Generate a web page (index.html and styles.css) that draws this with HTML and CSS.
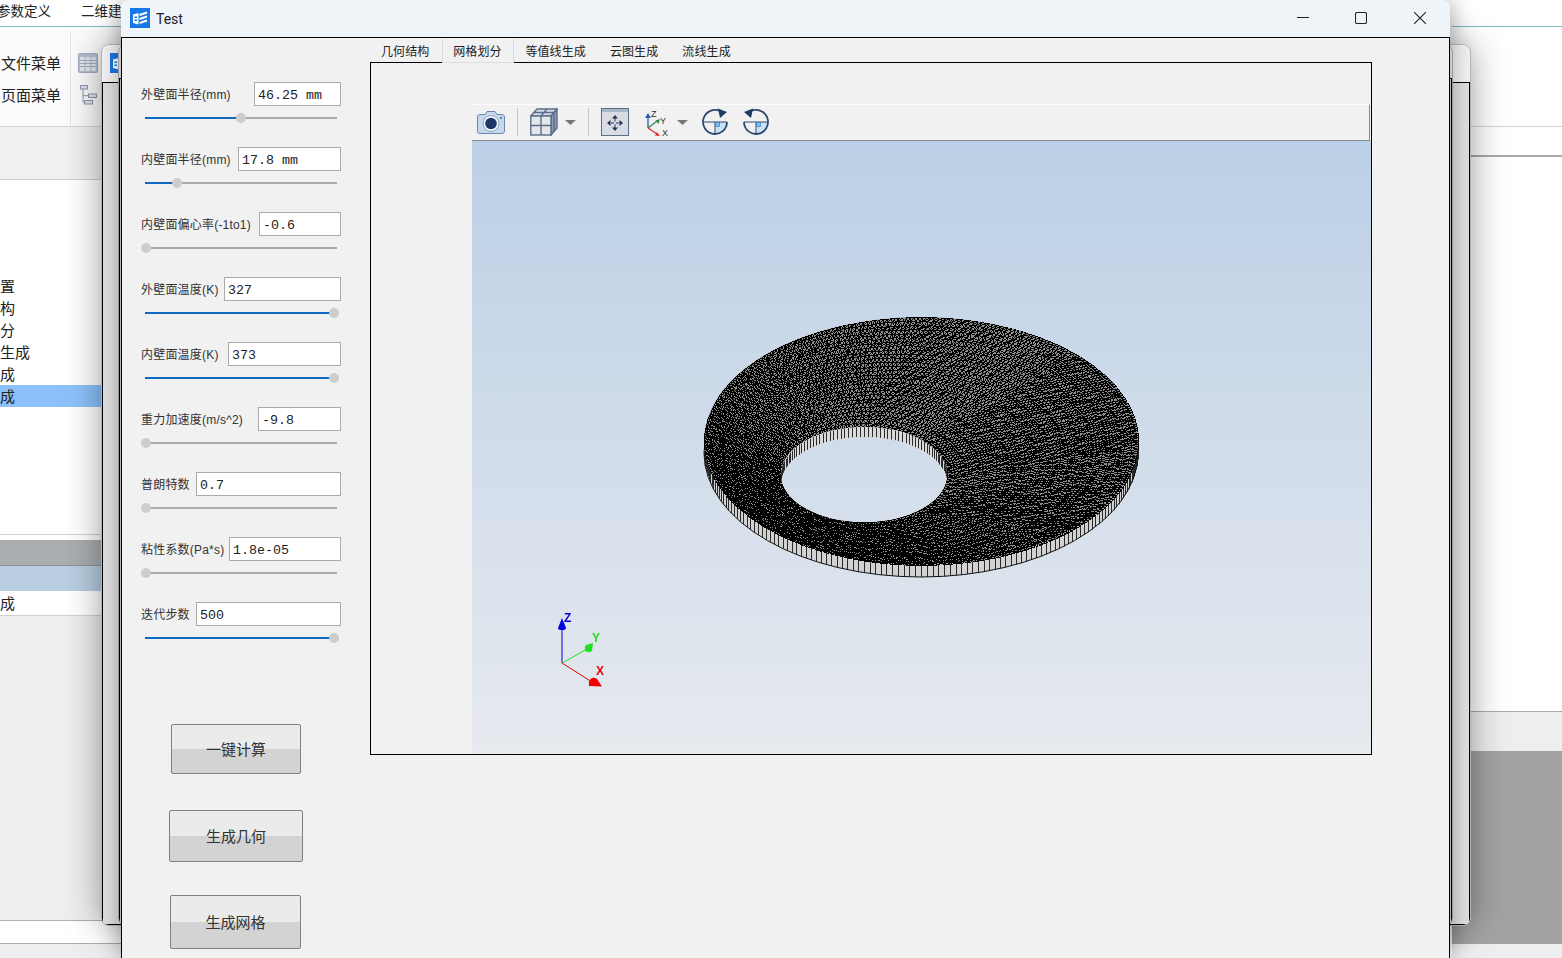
FILE: index.html
```html
<!DOCTYPE html>
<html lang="zh">
<head>
<meta charset="utf-8">
<title>Test</title>
<link rel="stylesheet" href="styles.css">
</head>
<body>
<div class="desktop">
  <div class="app">
    <div class="app-left">
      <div class="menu"><span class="menu-a">参数定义</span><span class="menu-b">二维建模</span></div>
      <div class="ribbon">
        <div class="ribbon-text"><span>文件菜单</span><span>页面菜单</span></div>
        <div class="ribbon-icons">
          <svg width="20" height="20" viewBox="0 0 20 20"><rect x="0.5" y="0.5" width="19" height="19" rx="1" fill="#b4bece" stroke="#a2adbd"/><rect x="2" y="4" width="4.500" height="14" fill="#e2e6eb"/><rect x="7.700" y="4" width="4.500" height="14" fill="#e2e6eb"/><rect x="13.400" y="4" width="4.500" height="14" fill="#e2e6eb"/><path d="M2 7.500h16M2 10.500h16M2 13.500h16" stroke="#a2adbd"/></svg>
          <svg width="17" height="20" viewBox="0 0 17 20"><g fill="#dfe4ea" stroke="#8a97a8"><rect x="0.5" y="0.5" width="7" height="3.500"/><rect x="8.500" y="9" width="8" height="3.500"/><rect x="4.500" y="15.500" width="8" height="3.500"/></g><path d="M3 4v13.200h1.500M3 10.700h5.500" fill="none" stroke="#8a97a8"/></svg>
        </div>
      </div>
      <div class="band"></div>
      <div class="tree">
        <div class="tree-row">置</div>
        <div class="tree-row">构</div>
        <div class="tree-row">分</div>
        <div class="tree-row">生成</div>
        <div class="tree-row">成</div>
        <div class="tree-row is-selected">成</div>
      </div>
      <div class="spacer-white"></div>
      <div class="head-gray"></div>
      <div class="head-blue"></div>
      <div class="head-row">成</div>
      <div class="fill-pale"></div>
      <div class="status-white"></div>
      <div class="foot-pale"></div>
    </div>
    <div class="app-right">
      <div class="menu"></div>
      <div class="ribbon ribbon-plain"></div>
      <div class="right-top"></div>
      <div class="right-doc"></div>
      <div class="right-pale"></div>
      <div class="right-gray"></div>
      <div class="foot-pale"></div>
    </div>
  </div>

  <div class="rear-window rear-one">
    <div class="rear-title">
      <svg class="app-icon" width="20" height="20" viewBox="0 0 20 20"><rect width="20" height="20" fill="#1677e6"/><path d="M3 6.500 8.500 5V16.500L3 15Z" fill="#fff"/><path d="M4.500 8.500h2.500v1.500H4.500zM4.500 11.500h2.500V13H4.500z" fill="#1677e6"/></svg>
    </div>
    <div class="rear-body"></div>
  </div>
  <div class="rear-window rear-two">
    <div class="rear-title"></div>
    <div class="rear-body"></div>
  </div>

  <div class="test-window">
    <div class="titlebar">
      <svg class="app-icon" width="20" height="20" viewBox="0 0 20 20"><rect width="20" height="20" fill="#1677e6"/><path d="M3 6.500 8.500 5V16.500L3 15Z" fill="#fff"/><path d="M4.500 8.500h2.500v1.500H4.500zM4.500 11.500h2.500V13H4.500z" fill="#1677e6"/><path d="M9.500 7 17 4.500M9.500 11 17 8.500M9.500 15 17 12.500" stroke="#fff" stroke-width="2" fill="none"/></svg>
      <span class="title-text">Test</span>
      <div class="win-controls">
        <svg width="12" height="12" viewBox="0 0 12 12"><path d="M0 5.500h12" stroke="#222" fill="none"/></svg>
        <svg width="12" height="12" viewBox="0 0 12 12"><rect x="0.5" y="0.5" width="11" height="11" rx="1.500" stroke="#222" fill="none" stroke-width="1.100"/></svg>
        <svg class="win-close" width="12" height="12" viewBox="0 0 12 12"><path d="M0 0 12 12M12 0 0 12" stroke="#222" fill="none" stroke-width="1.100"/></svg>
      </div>
    </div>
    <div class="test-body">
      <div class="param-panel">
        <div class="field">
          <div class="field-line"><label class="field-label">外壁面半径(mm)</label><div class="field-input w87">46.25 mm</div></div>
          <div class="slider" style="--v:50%"><div class="slider-fill"></div><div class="slider-thumb"></div></div>
        </div>
        <div class="field">
          <div class="field-line"><label class="field-label">内壁面半径(mm)</label><div class="field-input w103">17.8 mm</div></div>
          <div class="slider" style="--v:16.7%"><div class="slider-fill"></div><div class="slider-thumb"></div></div>
        </div>
        <div class="field">
          <div class="field-line"><label class="field-label">内壁面偏心率(-1to1)</label><div class="field-input w82">-0.6</div></div>
          <div class="slider" style="--v:0.5%"><div class="slider-thumb"></div></div>
        </div>
        <div class="field">
          <div class="field-line"><label class="field-label">外壁面温度(K)</label><div class="field-input w117">327</div></div>
          <div class="slider" style="--v:98.4%"><div class="slider-fill"></div><div class="slider-thumb"></div></div>
        </div>
        <div class="field">
          <div class="field-line"><label class="field-label">内壁面温度(K)</label><div class="field-input w113">373</div></div>
          <div class="slider" style="--v:98.4%"><div class="slider-fill"></div><div class="slider-thumb"></div></div>
        </div>
        <div class="field">
          <div class="field-line"><label class="field-label">重力加速度(m/s^2)</label><div class="field-input w83">-9.8</div></div>
          <div class="slider" style="--v:0.5%"><div class="slider-thumb"></div></div>
        </div>
        <div class="field">
          <div class="field-line"><label class="field-label">普朗特数</label><div class="field-input w145">0.7</div></div>
          <div class="slider" style="--v:0.5%"><div class="slider-thumb"></div></div>
        </div>
        <div class="field">
          <div class="field-line"><label class="field-label">粘性系数(Pa*s)</label><div class="field-input w112">1.8e-05</div></div>
          <div class="slider" style="--v:0.5%"><div class="slider-thumb"></div></div>
        </div>
        <div class="field">
          <div class="field-line"><label class="field-label">迭代步数</label><div class="field-input w145">500</div></div>
          <div class="slider" style="--v:98.4%"><div class="slider-fill"></div><div class="slider-thumb"></div></div>
        </div>
        <button class="action action-calc">一键计算</button>
        <button class="action action-geo">生成几何</button>
        <button class="action action-mesh">生成网格</button>
      </div>
      <div class="work">
        <div class="tabs">
          <div class="tab">几何结构</div>
          <div class="tab is-active">网格划分</div>
          <div class="tab">等值线生成</div>
          <div class="tab">云图生成</div>
          <div class="tab">流线生成</div>
        </div>
        <div class="pane">
          <div class="viewer">
            <div class="toolbar">
              <svg class="t-first" width="28" height="25" viewBox="0 0 28 25"><path d="M3 4.500h5l2-3h8l2 3h5a2.500 2.500 0 0 1 2.500 2.500v14a2.500 2.500 0 0 1-2.500 2.500H3A2.500 2.500 0 0 1 .5 21V7A2.500 2.500 0 0 1 3 4.500Z" fill="#c6d9ee" stroke="#6c86a6"/><circle cx="14" cy="13.500" r="8" fill="#f3f7fb" stroke="#8aa3c0"/><circle cx="14" cy="13.500" r="5.800" fill="#1d3768"/><circle cx="24" cy="8" r="1" fill="#3a5a88"/></svg>
              <span class="t-sep"></span>
              <svg class="t-gap12" width="28" height="28" viewBox="0 0 28 28"><path d="M.8 8 7 1h20l-6 7Z" fill="#d7dde4" stroke="#5a6d8a" stroke-width="1.400"/><path d="M21 8 27 1v19l-6 7Z" fill="#8c9cb2" stroke="#5a6d8a" stroke-width="1.400"/><rect x=".8" y="8" width="20.200" height="19" fill="#e3e7ec" stroke="#5a6d8a" stroke-width="1.400"/><path d="M.8 17.500H21M11 8v19M4 4.500h20M17 1l-6 7M24 4.500v19" fill="none" stroke="#5a6d8a" stroke-width="1.400"/></svg>
              <svg class="t-gap7" width="11" height="5" viewBox="0 0 11 5"><path d="M0 0h11L5.500 5Z" fill="#777"/></svg>
              <span class="t-sep t-gap12"></span>
              <svg class="t-gap12" width="28" height="28" viewBox="0 0 28 28"><rect x=".5" y=".5" width="27" height="27" fill="#d9dde3" stroke="#5a6d8a"/><rect x="1" y="1" width="26" height="3" fill="#a9b6c8"/><path d="M14 10v3.500M14 16.500V20M10 15h3M15 15h3" stroke="#1f3557" stroke-width="1"/><path d="m14 7 3 3.500h-6ZM14 23l3-3.500h-6ZM6 15l3.500-3v6ZM22 15l-3.500-3v6Z" fill="#1f3557"/></svg>
              <svg class="t-gap16" width="26" height="28" viewBox="0 0 26 28" font-family="Liberation Sans, sans-serif" font-size="9" fill="#333"><path d="M3 20V8" stroke="#2a5cb0" stroke-width="1.300"/><path d="M3 5 6 10H0Z" fill="#2a5cb0"/><path d="m3 20 9-7" stroke="#2e8f4a" stroke-width="1.300"/><path d="m15 11-1.500 5-3-3.500Z" fill="#2e8f4a"/><path d="m3 20 9 6" stroke="#e03030" stroke-width="1.300"/><path d="m15 28-5-.5 2-3.500Z" fill="#e03030"/><text x="6" y="9">Z</text><text x="15" y="16">Y</text><text x="17" y="28">X</text></svg>
              <svg class="t-gap6" width="11" height="5" viewBox="0 0 11 5"><path d="M0 0h11L5.500 5Z" fill="#777"/></svg>
              <svg class="t-gap14" width="26" height="28" viewBox="0 0 26 28"><path d="M13 14h11.500A11.500 11.500 0 0 1 13 25.500Z" fill="#c9e3f6"/><path d="M18.500 3.300A12 12 0 1 0 25 14" fill="none" stroke="#2e4a70" stroke-width="1.800"/><path d="M1 14H25M13 14V26" fill="none" stroke="#2e4a70" stroke-width="1"/><rect x="13.500" y="14.500" width="4" height="4" fill="#7fbce8" stroke="#3d7fb8" stroke-width=".7"/><path d="M16 .5 25 4l-7 6Z" fill="#1f3a63"/></svg>
              <svg class="t-gap15" width="26" height="28" viewBox="0 0 26 28"><path d="M13 14h11.500A11.500 11.500 0 0 1 13 25.500Z" fill="#c9e3f6"/><path d="M7.500 3.300A12 12 0 1 1 1 14" fill="none" stroke="#2e4a70" stroke-width="1.800"/><path d="M1 14H25M13 14V26" fill="none" stroke="#2e4a70" stroke-width="1"/><rect x="13.500" y="14.500" width="4" height="4" fill="#7fbce8" stroke="#3d7fb8" stroke-width=".7"/><path d="M10 .5 1 4l7 6Z" fill="#1f3a63"/></svg>
            </div>
            <div class="viewport">
              <canvas id="mesh" class="mesh" width="899" height="613"></canvas>
              <svg class="triad" width="60" height="90" viewBox="0 0 60 90" font-family="Liberation Sans, sans-serif" font-size="12" font-weight="700">
                <path d="M10 52V14" stroke="#0000e0" stroke-width="1"/>
                <path d="M10 7 14 17Q14 19 10 19T6 17Z" fill="#0000e0"/>
                <path d="m10 52 27-15" stroke="#22e022" stroke-width="1"/>
                <path d="M41 32 40 40Q36 43 33 39Q32 36 34 34Z" fill="#1ee01e"/>
                <path d="m10 52 30 19" stroke="#e00000" stroke-width="1"/>
                <path d="M50 75.500 37 75Q36 69 40 67Q43 66 45 68Z" fill="#f00000"/>
                <text x="12" y="11" fill="#0000e0">Z</text>
                <text x="40" y="31" fill="#22e022">Y</text>
                <text x="44" y="64" fill="#f00000">X</text>
              </svg>
            </div>
          </div>
        </div>
      </div>
    </div>
  </div>
</div>
<script src="script.js"></script>
</body>
</html>
```
FILE: styles.css
```css
* { box-sizing: border-box; }
html, body { margin: 0; padding: 0; }
body { width: 1562px; height: 958px; overflow: hidden; background: #fff; font-family: "Liberation Sans", "Noto Sans CJK SC", sans-serif; color: #222; }
.desktop { position: relative; width: 1562px; height: 958px; overflow: hidden; }

/* background application */
.app { display: flex; justify-content: space-between; height: 958px; }
.app-left { width: 130px; display: flex; flex-direction: column; font-size: 15px; }
.app-right { width: 110px; display: flex; flex-direction: column; }
.menu { height: 27px; flex: none; background: #fff; border-bottom: 1px solid #7fb9c6; font-size: 13.5px; display: flex; align-items: center; white-space: nowrap; overflow: hidden; padding-bottom: 6px; }
.menu-a { margin-left: -3px; }
.menu-b { margin-left: 30px; }
.ribbon { height: 100px; flex: none; display: flex; background: #fbfbfb; border-bottom: 1px solid #d4d4d4; }
.ribbon-plain { background: #fff; }
.ribbon-text { width: 71px; margin-top: 4px; padding: 22px 0 0 1px; border-right: 1px solid #e6e6e6; display: flex; flex-direction: column; gap: 10px; line-height: 22px; }
.ribbon-icons { padding: 26px 0 0 7px; display: flex; flex-direction: column; gap: 12px; }
.ribbon-icons svg:last-child { margin-left: 2px; }
.band { height: 53px; flex: none; background: #eff0f2; border-bottom: 1px solid #cfcfcf; }
.tree { height: 355px; flex: none; background: #fff; padding-top: 95px; border-bottom: 1px solid #d0d0d0; }
.tree-row { height: 22px; line-height: 24px; }
.tree-row.is-selected { background: #8cc2fb; }
.spacer-white { height: 5px; flex: none; background: #fff; }
.head-gray { height: 26px; flex: none; background: #aaaeb1; border-bottom: 1px solid #8d9195; }
.head-blue { height: 25px; flex: none; background: #b9cee1; }
.head-row { height: 25px; line-height: 26px; flex: none; background: #fff; border-bottom: 1px solid #d0d0d0; }
.fill-pale { height: 305px; flex: none; background: #eceef0; border-bottom: 1px solid #b0b0b0; }
.status-white { height: 23px; flex: none; background: #fff; border-bottom: 1px solid #aaa; }
.foot-pale { flex: 1; background: #eceef0; }
.right-top { height: 30px; flex: none; background: #fff; border-bottom: 2px solid #aaa; }
.right-doc { height: 555px; flex: none; background: #fff; border-bottom: 1px solid #aaa; }
.right-pale { height: 39px; flex: none; background: #eceef0; }
.right-gray { height: 193px; flex: none; background: #a3a3a3; }

/* rear windows (free canvas) */
.rear-window { position: absolute; top: 44px; height: 882px; border: 1px solid #b5b5b5; border-radius: 8px; background: #e0e0e0; box-shadow: 0 0 36px rgba(0,0,0,.38); overflow: hidden; display: flex; flex-direction: column; }
.rear-one { left: 101px; width: 1370px; }
.rear-two { left: 118px; width: 1335px; box-shadow: none; }
.rear-title { flex: none; height: 37px; background: #f3f3f3; padding: 8px 0 0 8px; }
.rear-two .rear-title { height: 33px; }
.rear-body { flex: 1; border: 1px solid #000; background: #e0e0e0; }

/* main window */
.test-window { position: absolute; left: 121px; top: 0; width: 1329px; height: 958px; border-radius: 8px 8px 0 0; background: #f1f1f1; box-shadow: 0 0 24px rgba(0,0,0,.38); display: flex; flex-direction: column; overflow: hidden; }
.titlebar { flex: none; height: 38px; background: #eff4f8; border-bottom: 1px solid #000; display: flex; align-items: center; padding: 0 24px 2px 9px; }
.app-icon { flex: none; display: block; }
.title-text { margin: 3px 0 0 6px; font: 14px/20px Roboto, sans-serif; color: #222; }
.win-controls { margin-left: auto; display: flex; gap: 46px; }
.win-close { margin-left: 1px; }
.test-body { flex: 1; display: flex; border-left: 1px solid #000; border-right: 1px solid #000; min-height: 0; }

/* parameter panel */
.param-panel { flex: none; width: 248px; padding: 44px 0 0 19px; display: flex; flex-direction: column; align-items: flex-start; }
.field { width: 200px; height: 65px; flex: none; }
.field-line { display: flex; align-items: center; justify-content: space-between; height: 24px; }
.field-label { font-size: 12px; letter-spacing: .2px; color: #333; white-space: nowrap; padding-bottom: 2px; }
.field-input { flex: none; height: 24px; border: 1px solid #aaa; background: #fff; padding: 1px 0 0 3px; font: 13.33px/23px "Liberation Mono", monospace; color: #222; white-space: pre; }
.w82 { width: 82px; } .w83 { width: 83px; } .w87 { width: 87px; } .w103 { width: 103px; }
.w112 { width: 112px; } .w113 { width: 113px; } .w117 { width: 117px; } .w145 { width: 145px; }
.slider { position: relative; width: 192px; height: 2px; margin: 11px 0 0 4px; background: #aaa; }
.slider-fill { width: var(--v); height: 2px; background: #0f69bd; }
.slider-thumb { position: absolute; left: var(--v); top: -4px; width: 10px; height: 10px; margin-left: -5px; border-radius: 50%; background: #cdcdcd; }
.action { display: block; padding: 0 0 2px; border: 1px solid #808080; border-radius: 2px; background: linear-gradient(#ebebeb 0 50%, #d3d3d3 50% 100%); font: 15px/1 "Noto Sans CJK SC", sans-serif; color: #333; flex: none; }
.action-calc { width: 130px; height: 50px; margin: 57px 0 0 30px; }
.action-geo { width: 134px; height: 52px; margin: 36px 0 0 28px; }
.action-mesh { width: 131px; height: 54px; margin: 33px 0 0 29px; }

/* tabs */
.work { flex: none; width: 1002px; }
.tabs { display: flex; height: 24px; font-size: 12px; letter-spacing: .1px; }
.tab { padding: 0 13px 0 11px; height: 25px; line-height: 26px; color: #222; font-family: "Noto Sans CJK SC", sans-serif; position: relative; white-space: nowrap; }
.tab.is-active { z-index: 1; margin-top: 1px; height: 24px; line-height: 24px; background: #f1f1f1; border: 1px solid #dcdcdc; border-top: 0; padding: 0 2px 0 0; width: 72px; text-align: center; }
.pane { height: 693px; border: 1px solid #000; padding: 41px 0 0 101px; }
.viewer { height: 100%; display: flex; flex-direction: column; }
.toolbar { flex: none; height: 37px; margin-right: 1px; background: #f1f1f1; border-top: 1px solid #fff; border-right: 1px solid #8a8a8a; border-bottom: 1px solid #8a8a8a; display: flex; align-items: center; padding: 0 0 1px 5px; }
.t-sep { width: 1px; height: 28px; background: #c4c4c4; margin-left: 12px; }
.t-gap6 { margin-left: 6px; } .t-gap7 { margin-left: 7px; } .t-gap12 { margin-left: 12px; }
.t-gap14 { margin-left: 14px; } .t-gap15 { margin-left: 15px; } .t-gap16 { margin-left: 16px; }
.viewport { flex: 1; position: relative; background: linear-gradient(#bbcfe6, #e7eaef); overflow: hidden; }
.mesh { position: absolute; left: 0; top: 0; }
.triad { position: absolute; left: 80px; top: 470px; }
```
FILE: script.js
```js
(function () {
  var canvas = document.getElementById('mesh');
  var ctx = canvas.getContext('2d');
  var W = canvas.width, H = canvas.height, OX = 472, OY = 141;
  ctx.translate(-OX, -OY);

  var outer = { cx: 921, cy: 441, rx: 217, ry: 124 };
  var hole = { cx: 864, cy: 474.5, rx: 83, ry: 47.5 };
  var WALL = 12, HOLE_WALL = 10, RINGS = 27, SEG_IN = 130, SEG_OUT = 340;

  function pt(e, a) {
    return [e.cx + e.rx * Math.cos(a), e.cy + e.ry * Math.sin(a)];
  }
  function ellipse(e, dy) {
    ctx.beginPath();
    ctx.ellipse(e.cx, e.cy + (dy || 0), e.rx, e.ry, 0, 0, Math.PI * 2);
  }
  function noise(i, j) {
    var s = Math.sin(i * 12.9898 + j * 78.233) * 43758.5453;
    return s - Math.floor(s) - 0.5;
  }
  function wallLines(e, dy, from, to, count) {
    ctx.strokeStyle = '#2a2a2a';
    ctx.lineWidth = 1;
    ctx.beginPath();
    for (var i = 0; i <= count; i++) {
      var p = pt(e, from + (to - from) * i / count);
      var x = Math.round(p[0]) + 0.5;
      ctx.moveTo(x, p[1]);
      ctx.lineTo(x, p[1] + dy);
    }
    ctx.stroke();
  }

  /* outer rim */
  ellipse(outer, WALL);
  ctx.fillStyle = '#d2d2d2';
  ctx.fill();
  wallLines(outer, WALL, 0, Math.PI, 118);
  ellipse(outer, WALL);
  ctx.strokeStyle = '#111';
  ctx.lineWidth = 1;
  ctx.stroke();

  /* top surface: fill, then aliased triangle edges written straight to the pixels */
  ellipse(outer);
  ctx.fillStyle = '#8e8e8e';
  ctx.fill();
  var img = ctx.getImageData(0, 0, W, H);
  var d = img.data;
  function dot(x, y) {
    var dx = (x + OX - outer.cx) / outer.rx, dy = (y + OY - outer.cy) / outer.ry;
    if (dx * dx + dy * dy > 1.005) return;
    var k = (y * W + x) * 4;
    d[k] = d[k + 1] = d[k + 2] = 0;
    d[k + 3] = 255;
  }
  function line(a, b) {
    var x0 = Math.round(a[0] - OX), y0 = Math.round(a[1] - OY);
    var x1 = Math.round(b[0] - OX), y1 = Math.round(b[1] - OY);
    var dx = Math.abs(x1 - x0), dy = -Math.abs(y1 - y0);
    var sx = x0 < x1 ? 1 : -1, sy = y0 < y1 ? 1 : -1, err = dx + dy;
    for (;;) {
      dot(x0, y0);
      if (x0 === x1 && y0 === y1) break;
      var e2 = 2 * err;
      if (e2 >= dy) { err += dy; x0 += sx; }
      if (e2 <= dx) { err += dx; y0 += sy; }
    }
  }
  function ringPoint(j, i, n) {
    var t = j / RINGS;
    var a = (i + (j % 2) * 0.37) / n * Math.PI * 2;
    var p = pt(hole, a), q = pt(outer, a);
    var k = (j === 0 || j === RINGS) ? 0 : 1.7;
    return [
      p[0] + (q[0] - p[0]) * t + noise(i, j) * k,
      p[1] + (q[1] - p[1]) * t + noise(j, i) * k * 0.7
    ];
  }
  function ringCount(j) {
    return Math.round(SEG_IN + (SEG_OUT - SEG_IN) * j / RINGS);
  }
  for (var j = 0; j <= RINGS; j++) {
    var n = ringCount(j), i;
    for (i = 0; i < n; i++) {
      line(ringPoint(j, i, n), ringPoint(j, (i + 1) % n, n));
    }
    if (j === RINGS) break;
    var m = ringCount(j + 1), ia = 0, ib = 0;
    while (ia < n || ib < m) {
      line(ringPoint(j, ia % n, n), ringPoint(j + 1, ib % m, m));
      if (ib / m < ia / n || ia >= n) ib++; else ia++;
    }
  }
  ctx.putImageData(img, 0, 0);

  /* hole */
  ctx.save();
  ctx.globalCompositeOperation = 'destination-out';
  ellipse(hole);
  ctx.fill();
  ctx.restore();

  ctx.save();
  ellipse(hole);
  ctx.clip();
  ctx.fillStyle = '#dadada';
  ctx.fillRect(hole.cx - hole.rx, hole.cy - hole.ry, hole.rx * 2, hole.ry * 2);
  wallLines(hole, HOLE_WALL, Math.PI, Math.PI * 2, 66);
  ctx.globalCompositeOperation = 'destination-out';
  ellipse(hole, HOLE_WALL);
  ctx.fill();
  ctx.restore();
})();
```
